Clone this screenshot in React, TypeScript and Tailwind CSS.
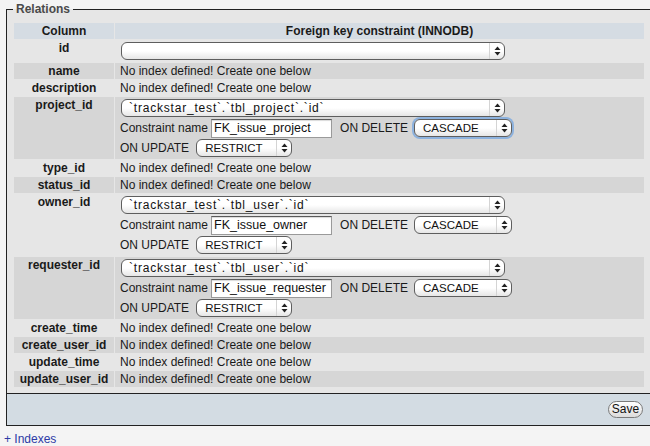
import React from "react";
import clsx from "clsx";

type Kind = "select" | "none" | "fk";

interface RowDef {
  name: string;
  kind: Kind;
  target?: string;
  constraint?: string;
  focused?: boolean;
}

const rows: RowDef[] = [
  { name: "id", kind: "select" },
  { name: "name", kind: "none" },
  { name: "description", kind: "none" },
  {
    name: "project_id",
    kind: "fk",
    target: "`trackstar_test`.`tbl_project`.`id`",
    constraint: "FK_issue_project",
    focused: true,
  },
  { name: "type_id", kind: "none" },
  { name: "status_id", kind: "none" },
  {
    name: "owner_id",
    kind: "fk",
    target: "`trackstar_test`.`tbl_user`.`id`",
    constraint: "FK_issue_owner",
  },
  {
    name: "requester_id",
    kind: "fk",
    target: "`trackstar_test`.`tbl_user`.`id`",
    constraint: "FK_issue_requester",
  },
  { name: "create_time", kind: "none" },
  { name: "create_user_id", kind: "none" },
  { name: "update_time", kind: "none" },
  { name: "update_user_id", kind: "none" },
];

const Arrows = () => (
  <svg width="7" height="10" viewBox="0 0 7 10" className="shrink-0">
    <path d="M0.5 4 L3.5 0.5 L6.5 4 Z" fill="#222" />
    <path d="M0.5 6 L3.5 9.5 L6.5 6 Z" fill="#222" />
  </svg>
);

interface SelectProps {
  value?: string;
  className: string;
  textClass?: string;
  focused?: boolean;
}

const Select: React.FC<SelectProps> = ({ value, className, textClass, focused }) => {
  return (
    <div
      className={clsx(
        "relative flex h-[18px] shrink-0 items-center overflow-hidden rounded-[6px] border border-[#5e5e5e] bg-gradient-to-b from-white via-white to-[#e6e6e6] text-[#111]",
        focused && "shadow-[0_0_0_2px_#8db2de]",
        className
      )}
    >
      <span className={clsx("flex-1 truncate whitespace-pre leading-[16px]", textClass)}>{value}</span>
      <div className="flex h-full w-[15px] items-center justify-center border-l border-[#d4d4d4]">
        <Arrows />
      </div>
    </div>
  );
};

const NoIndex = () => <span>No index defined! Create one below</span>;

const FkCell: React.FC<{ row: RowDef }> = ({ row }) => {
  return (
    <div className="py-[1px]">
      <div className="flex h-[20px] items-center">
        <Select
          value={row.target}
          className="ml-[1px] w-[384px]"
          textClass="pl-[7px] text-[12px] tracking-[0.8px]"
        />
      </div>
      <div className="flex h-[20px] items-center">
        <span className="mr-[3px]">Constraint name</span>
        <div className="flex h-[19px] w-[121px] items-center border border-[#9a9a9a] border-t-[#5a5a5a] bg-white pl-[2px] text-[12.5px] text-[#111] shadow-[inset_0_1px_1px_rgba(0,0,0,0.15)]">
          {row.constraint}
        </div>
        <span className="ml-[8px] mr-[6px]">ON DELETE</span>
        <Select
          value="CASCADE"
          className="w-[98px]"
          textClass="pl-[8px] text-[11.5px]"
          focused={row.focused}
        />
      </div>
      <div className="flex h-[20px] items-center">
        <span className="mr-[7px]">ON UPDATE</span>
        <Select value="RESTRICT" className="w-[96px]" textClass="pl-[8px] text-[11.5px]" />
      </div>
    </div>
  );
};

export default function App() {
  return (
    <div className="h-[446px] w-[650px] overflow-hidden bg-[#f4f4f4] font-['Liberation_Sans',Arial,sans-serif] text-[12px] text-[#1a1a1a]">
      <fieldset className="ml-[6px] w-[660px] border border-[#222] bg-[#e6e6e6] pb-[5px]">
        <legend className="ml-[6px] px-[3px] text-[12px] font-bold leading-[18px] text-[#4a4a4a]">
          Relations
        </legend>
        <table className="ml-[6px] mt-[4px] w-[632px] table-fixed border-separate border-spacing-[1px]">
          <thead>
            <tr>
              <th className="w-[100px] bg-[#d5dce3] p-0 text-center font-bold leading-[16px]">Column</th>
              <th className="bg-[#d5dce3] p-0 text-center font-bold leading-[16px]">
                Foreign key constraint (INNODB)
              </th>
            </tr>
          </thead>
          <tbody>
            {rows.map((row, i) => (
              <tr key={row.name} className={i % 2 === 0 ? "bg-[#e6e6e6]" : "bg-[#d6d6d6]"}>
                <td className="p-0 text-center align-top font-bold leading-[16px]">{row.name}</td>
                <td className="py-0 pl-[5px] pr-0 align-top leading-[16px]">
                  {row.kind === "none" && <NoIndex />}
                  {row.kind === "select" && (
                    <div className="flex h-[22px] items-center">
                      <Select className="ml-[1px] w-[384px]" />
                    </div>
                  )}
                  {row.kind === "fk" && <FkCell row={row} />}
                </td>
              </tr>
            ))}
          </tbody>
        </table>
      </fieldset>
      <div className="ml-[6px] flex h-[32px] w-[660px] items-center justify-end border-b border-l border-[#222] bg-[#d3dce3] pr-[23px]">
        <button className="h-[17px] w-[35px] rounded-full border border-[#7a7a7a] bg-gradient-to-b from-white to-[#dcdcdc] text-[12px] leading-[15px] text-[#111]">
          Save
        </button>
      </div>
      <div className="mt-[6px] pl-[4px] leading-[14px]">
        <a className="text-[#2c3aa6]">+ Indexes</a>
      </div>
    </div>
  );
}
